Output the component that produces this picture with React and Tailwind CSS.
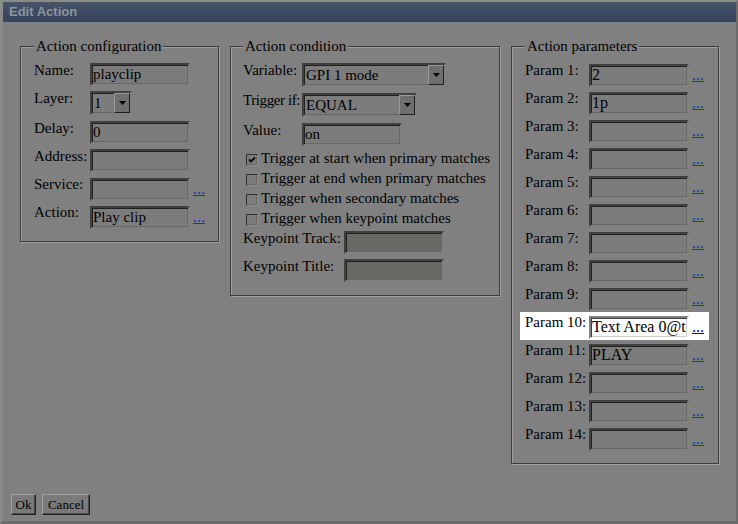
import React from 'react';

// classic inset field border, dimmed by the modal shade
const insetBox =
  'border-2 border-t-[#404040] border-l-[#404040] border-r-[#808080] border-b-[#808080] shadow-[inset_1px_1px_0_#202020,inset_-1px_-1px_0_#6a6864]';

function TextBox({ value = '', size = 'text-[15px]', bg = 'bg-[#7c7c7c]', w = 'w-[100px]' }) {
  return (
    <input
      readOnly
      value={value}
      className={`${w} h-[23px] px-[1px] ${size} ${bg} ${insetBox} outline-none text-black`}
    />
  );
}

function Dots({ bright = false }) {
  return (
    <a
      href="#"
      className={`ml-[3px] text-[16px] underline ${bright ? 'text-[#0000ee]' : 'text-[#2633b0]'}`}
    >
      ...
    </a>
  );
}

function Dropdown({ value, w }) {
  return (
    <div className={`${w} h-[24px] flex bg-[#7c7c7c] ${insetBox}`}>
      <span className="flex-1 pl-[2px] text-[15px] leading-[20px] whitespace-nowrap overflow-hidden">{value}</span>
      <span className="w-[16px] flex items-center justify-center bg-[#6e6e6e] border border-t-[#9a9a9a] border-l-[#9a9a9a] border-r-[#202020] border-b-[#202020]">
        <svg width="7" height="4" viewBox="0 0 7 4">
          <path d="M0 0h7L3.5 4z" fill="#000" />
        </svg>
      </span>
    </div>
  );
}

function Row({ label, lw, h = 'h-[28px]', tight = false, children }) {
  return (
    <div className={`flex ${h}`}>
      <span
        className={`${lw} shrink-0 text-[15px] leading-[15px] whitespace-nowrap ${tight ? 'tracking-[-0.4px]' : ''}`}
      >
        {label}
      </span>
      <div className="flex items-baseline">{children}</div>
    </div>
  );
}

function Check({ checked, label }) {
  return (
    <div className="flex h-[20px] pl-[3px]">
      <span className="mt-[6px] w-[12px] h-[12px] flex items-center justify-center bg-[#7c7c7c] border border-t-[#303030] border-l-[#303030] border-r-[#8c8c8c] border-b-[#8c8c8c] shadow-[inset_-1px_-1px_0_#6a6864]">
        {checked && (
          <svg width="8" height="8" viewBox="0 0 8 8">
            <path d="M1 3.5L3 5.5L7 1.5" stroke="#000" strokeWidth="1.8" fill="none" />
          </svg>
        )}
      </span>
      <span className="ml-[3px] text-[15px] leading-[20px] whitespace-nowrap">{label}</span>
    </div>
  );
}

function Group({ title, w, pl = 'pl-[13px]', children }) {
  return (
    <fieldset
      className={`${w} ${pl} shrink-0 min-w-0 border border-[#3c3c3c] shadow-[inset_1px_1px_0_#a0a0a0,1px_1px_0_#a0a0a0] pt-[8px] pb-[8px]`}
    >
      <legend className="px-[2px] text-[15px] leading-[17px] bg-[#808080]">{title}</legend>
      {children}
    </fieldset>
  );
}

const params = ['2', '1p', '', '', '', '', '', '', '', 'Text Area 0@text', 'PLAY', '', '', ''];

export default function App() {
  return (
    <div className="w-[738px] h-[524px] flex flex-col bg-[#808080] border-l-[3px] border-t-2 border-r-2 border-b-[3px] border-l-[#8a8a8a] border-t-[#8a8a8a] border-r-[#6b6b6b] border-b-[#6b6b6b] font-['Liberation_Serif','Times_New_Roman',serif] text-black">
      {/* Title bar */}
      <div className="h-[20px] shrink-0 flex items-center pl-[6px] bg-linear-to-b from-[#46546a] to-[#34415a] font-['Liberation_Sans',Arial,sans-serif] font-bold text-[13px] text-[#8e939b]">
        Edit Action
      </div>

      <div className="flex-1 flex flex-col">
        <div className="flex items-start gap-[11px] pl-[17px] pt-[16px]">
          {/* Action configuration */}
          <Group title="Action configuration" w="w-[199px]">
            <Row label="Name:" lw="w-[56px]">
              <TextBox value="playclip" />
            </Row>
            <Row label="Layer:" lw="w-[56px]" h="h-[30px]">
              <Dropdown value="1" w="w-[42px]" />
            </Row>
            <Row label="Delay:" lw="w-[56px]">
              <TextBox value="0" />
            </Row>
            <Row label="Address:" lw="w-[56px]">
              <TextBox />
            </Row>
            <Row label="Service:" lw="w-[56px]">
              <TextBox />
              <Dots />
            </Row>
            <Row label="Action:" lw="w-[56px]">
              <TextBox value="Play clip" />
              <Dots />
            </Row>
          </Group>

          {/* Action condition */}
          <Group title="Action condition" w="w-[270px]" pl="pl-[12px]">
            <Row label="Variable:" lw="w-[59px]" h="h-[30px]">
              <Dropdown value="GPI 1 mode" w="w-[144px]" />
            </Row>
            <Row label="Trigger if:" lw="w-[59px]" h="h-[30px]" tight>
              <Dropdown value="EQUAL" w="w-[115px]" />
            </Row>
            <Row label="Value:" lw="w-[59px]" h="h-[25px]">
              <TextBox value="on" />
            </Row>
            <Check checked label="Trigger at start when primary matches" />
            <Check label="Trigger at end when primary matches" />
            <Check label="Trigger when secondary matches" />
            <Check label="Trigger when keypoint matches" />
            <div className="mt-[3px]">
              <Row label="Keypoint Track:" lw="w-[101px]">
                <TextBox bg="bg-[#6a6864]" />
              </Row>
              <Row label="Keypoint Title:" lw="w-[101px]">
                <TextBox bg="bg-[#6a6864]" />
              </Row>
            </div>
          </Group>

          {/* Action parameters */}
          <Group title="Action parameters" w="w-[208px]">
            {params.map((v, i) =>
              i === 9 ? (
                <div key={i} className="flex h-[28px] w-[189px] -ml-[5px] pl-[5px] -mt-[3px] pt-[3px] mb-[3px] bg-white">
                  <span className="w-[64px] shrink-0 text-[15px] leading-[15px] whitespace-nowrap">Param {i + 1}:</span>
                  <div className="flex items-baseline">
                    <input
                      readOnly
                      value={v}
                      className="w-[100px] h-[23px] px-[1px] text-[16px] bg-white border-2 border-t-[#808080] border-l-[#808080] border-r-white border-b-white shadow-[inset_1px_1px_0_#404040,inset_-1px_-1px_0_#d4d0c8] outline-none"
                    />
                    <Dots bright />
                  </div>
                </div>
              ) : (
                <Row key={i} label={`Param ${i + 1}:`} lw="w-[64px]">
                  <TextBox value={v} size="text-[16px]" />
                  <Dots />
                </Row>
              )
            )}
          </Group>
        </div>

        <div className="mt-auto flex gap-[6px] pl-[8px] pb-[6px]">
          <button className="w-[25px] h-[21px] text-[13px] bg-[#7a7a7a] border border-t-[#a0a0a0] border-l-[#a0a0a0] border-r-[#202020] border-b-[#202020] shadow-[inset_-1px_-1px_0_#4a4a4a]">
            Ok
          </button>
          <button className="w-[48px] h-[21px] text-[13px] bg-[#7a7a7a] border border-t-[#a0a0a0] border-l-[#a0a0a0] border-r-[#202020] border-b-[#202020] shadow-[inset_-1px_-1px_0_#4a4a4a]">
            Cancel
          </button>
        </div>
      </div>
    </div>
  );
}
